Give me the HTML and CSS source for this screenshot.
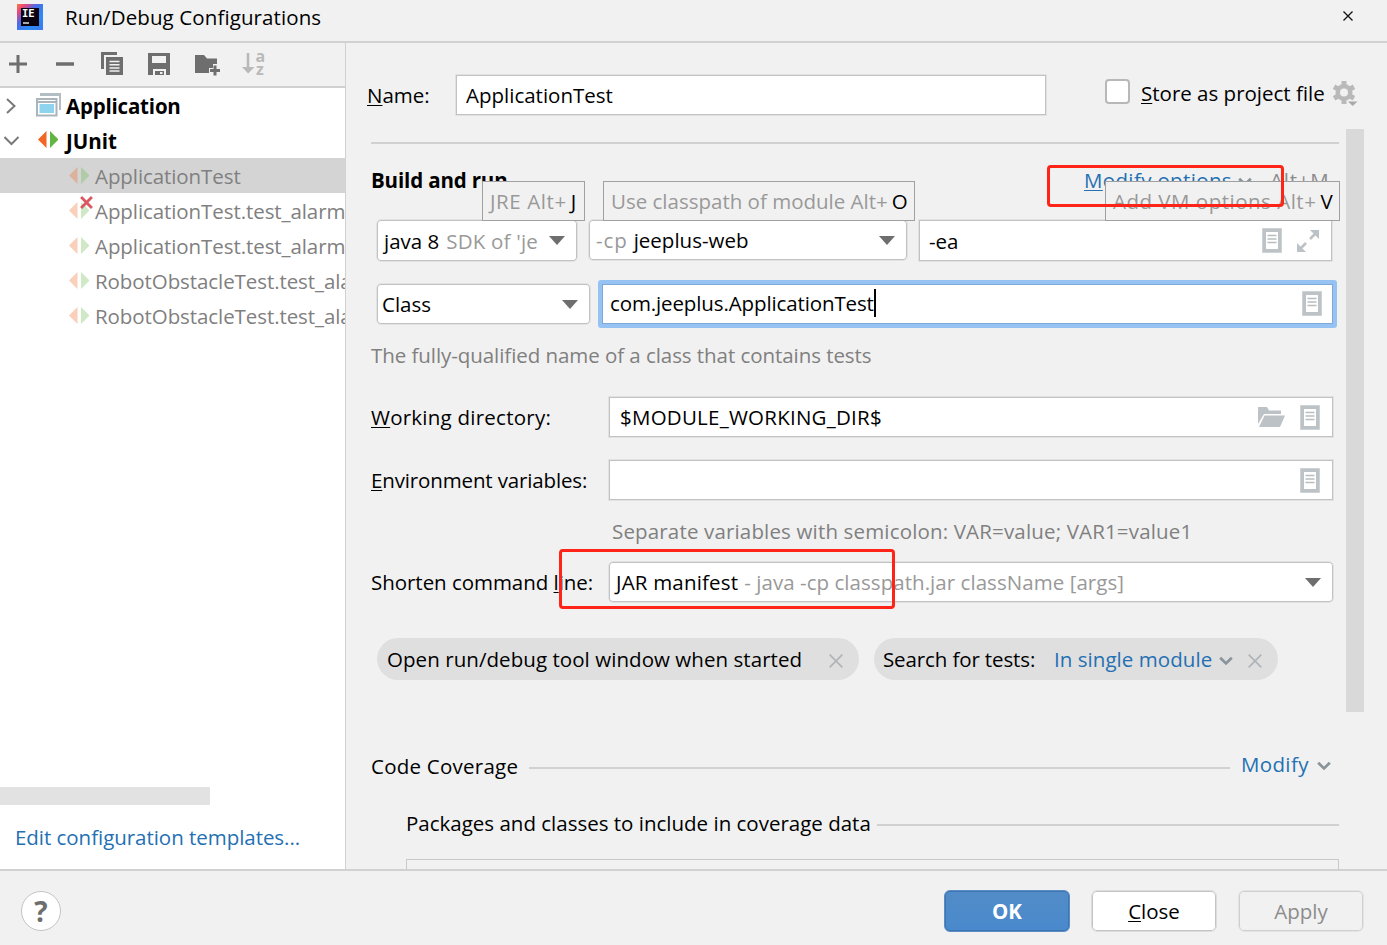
FILE: index.html
```html
<!DOCTYPE html>
<html lang="en">

<head>
    <meta charset="UTF-8">
    <meta name="viewport" content="width=device-width, initial-scale=1.0">
    <title>Run/Debug Configurations</title>
    <link rel="stylesheet" href="styles.css">
</head>

<body>
    <!-- shared icons -->
    <svg class="defs" width="0" height="0">
        <symbol id="doc" viewBox="0 0 20 25">
            <path d="M0 0h20v25H0z" fill="#dfe3e5" />
            <path d="M.5.5h19v24H.5zM4 4v17h12V4z" fill="#bcc2c6" fill-rule="evenodd" />
            <path d="M4 4h12v17H4z" fill="#fff" />
            <path d="M5.500 7.500h9M5.500 11h9M5.500 14.500h9" stroke="#b7bdc1" stroke-width="1.400" />
        </symbol>
        <symbol id="junit" viewBox="0 0 20 18">
            <path d="M8.500 0v17L0 8.500z" fill="#f26522" />
            <path d="M12 0v17l8.500-8.500z" fill="#62b543" />
        </symbol>
        <symbol id="arrow" viewBox="0 0 16 9">
            <path d="M0 0h16L8 9z" fill="#6e6e6e" />
        </symbol>
        <symbol id="chevron" viewBox="0 0 14 10">
            <path d="M1.200 1.800L7 7.400l5.800-5.600" fill="none" stroke="#8a949b" stroke-width="2.800" />
        </symbol>
        <symbol id="cross" viewBox="0 0 14 14">
            <path d="M.7.7l12.600 12.600M13.300.7L.7 13.300" stroke="#b0b5b9" stroke-width="1.700" />
        </symbol>
    </svg>

    <div class="titlebar">
        <svg class="logo" width="26" height="26" viewBox="0 0 26 26">
            <defs>
                <linearGradient id="g" x1="0" y1="0" x2="1" y2="1">
                    <stop offset="0" stop-color="#f97a3d" />
                    <stop offset=".18" stop-color="#e8467c" />
                    <stop offset=".4" stop-color="#4b6be8" />
                    <stop offset=".7" stop-color="#2b8cf5" />
                    <stop offset="1" stop-color="#3e78f0" />
                </linearGradient>
            </defs>
            <rect width="26" height="26" fill="url(#g)" />
            <rect x="4" y="4" width="18" height="18" fill="#0b0410" />
            <text class="logo-text" x="5" y="13">IE</text>
            <path d="M6 19h6" stroke="#ddd" stroke-width="1.500" />
        </svg>
        <span class="title">Run/Debug Configurations</span>
        <svg class="close" width="10" height="10" viewBox="0 0 10 10">
            <path d="M.5.500l9 9M9.500.500l-9 9" stroke="#111" stroke-width="1.300" />
        </svg>
    </div>

    <div class="main">
        <div class="sidebar">
            <div class="toolbar">
                <svg width="18" height="18" viewBox="0 0 18 18">
                    <path d="M9 0v18M0 9h18" stroke="#6e6e6e" stroke-width="3" />
                </svg>
                <svg width="18" height="18" viewBox="0 0 18 18">
                    <path d="M0 9h18" stroke="#6e6e6e" stroke-width="3.500" />
                </svg>
                <svg width="22" height="24" viewBox="0 0 22 24">
                    <path d="M0 0h16v3H3v14H0z" fill="#6e6e6e" />
                    <path d="M5 5h17v18H5z" fill="#6e6e6e" />
                    <path d="M8.500 9.500h10M8.500 12.700h10M8.500 16h10M8.500 19h10" stroke="#f1f1f1" stroke-width="1.400" />
                </svg>
                <svg width="22" height="22" viewBox="0 0 22 22">
                    <path d="M0 0h22v22h-4v-6H5v6H0zM4 3v7h14V3z" fill="#6e6e6e" fill-rule="evenodd" />
                    <path d="M7 18h9v4H7z" fill="#6e6e6e" />
                    <path d="M12 19h2.500v2H12z" fill="#f1f1f1" />
                </svg>
                <svg width="26" height="22" viewBox="0 0 26 22">
                    <path d="M0 1h9l3 3.500h10V10h-4v4h-4v5H0z" fill="#6e6e6e" />
                    <path d="M20 11.500v10M15 16.500h10" stroke="#6e6e6e" stroke-width="3" />
                </svg>
                <svg width="24" height="24" viewBox="0 0 24 24">
                    <path d="M6 1v16" stroke="#b9b9b9" stroke-width="2.600" />
                    <path d="M0 15h12.500L6.200 21.500z" fill="#b9b9b9" />
                    <text class="az" x="13.500" y="10">a</text>
                    <text class="az" x="14" y="22.500">z</text>
                </svg>
            </div>
            <div class="tree">
                <div class="row group">
                    <svg class="fold" width="16" height="16" viewBox="0 0 16 16">
                        <path d="M3 1l7.500 7L3 15" fill="none" stroke="#7a7a7a" stroke-width="2" />
                    </svg>
                    <svg class="group-icon" width="26" height="24" viewBox="0 0 26 24">
                        <path d="M4 0h21v17h-2V3H4z" fill="#b3bdc4" />
                        <path d="M0 5h21.500v18.500H0zM2 10v11.500h17.500V10z" fill="#a9b4bb" fill-rule="evenodd" />
                        <path d="M2 7.500h17.500" stroke="#fff" />
                        <path d="M3.500 11h14.500v9H3.500z" fill="#8ed4ee" />
                    </svg>
                    <span>Application</span>
                </div>
                <div class="row group">
                    <svg class="fold" width="16" height="16" viewBox="0 0 16 16">
                        <path d="M.500 4L7.500 11l7-7" fill="none" stroke="#7a7a7a" stroke-width="2" />
                    </svg>
                    <svg class="group-icon" width="26" height="18" viewBox="-2 0 26 18">
                        <use href="#junit" width="20" height="18" />
                    </svg>
                    <span class="junit-label">JUnit</span>
                </div>
                <div class="row item selected">
                    <svg class="item-icon" width="20" height="18"><use href="#junit" /></svg>
                    <span>ApplicationTest</span>
                </div>
                <div class="row item">
                    <svg class="item-icon" width="20" height="18"><use href="#junit" /></svg>
                    <svg class="error" width="13" height="13" viewBox="0 0 12 12">
                        <path d="M1 1l10 10M11 1L1 11" stroke="#db5860" stroke-width="2.600" />
                    </svg>
                    <span>ApplicationTest.test_alarmInfo</span>
                </div>
                <div class="row item">
                    <svg class="item-icon" width="20" height="18"><use href="#junit" /></svg>
                    <span>ApplicationTest.test_alarmInfo</span>
                </div>
                <div class="row item">
                    <svg class="item-icon" width="20" height="18"><use href="#junit" /></svg>
                    <span>RobotObstacleTest.test_alarm</span>
                </div>
                <div class="row item">
                    <svg class="item-icon" width="20" height="18"><use href="#junit" /></svg>
                    <span>RobotObstacleTest.test_alarm</span>
                </div>
            </div>
            <div class="hscroll"></div>
            <a class="templates">Edit configuration templates...</a>
        </div>

        <div class="editor">
            <div class="name-row">
                <label class="name-label"><u>N</u>ame:</label>
                <div class="field name-field">ApplicationTest</div>
                <div class="checkbox"></div>
                <span class="store"><u>S</u>tore as project file</span>
                <svg class="gear" width="25" height="26" viewBox="0 0 25 26">
                    <g fill="#b9b9b9">
                        <path d="M8.500 0h5v23h-5z" />
                        <path d="M8.500 0h5v23h-5z" transform="rotate(60 11 11.500)" />
                        <path d="M8.500 0h5v23h-5z" transform="rotate(120 11 11.500)" />
                        <circle cx="11" cy="11.500" r="8.500" />
                    </g>
                    <circle cx="11" cy="11.500" r="4" fill="#f1f1f1" />
                    <path d="M13.500 19.500h12l-6 7z" fill="#f1f1f1" />
                    <path d="M15 20.500h9.500L19.700 25z" fill="#a8a8a8" />
                </svg>
            </div>
            <div class="scroll">
                <div class="form">
                    <div class="line"></div>
                    <div class="build-row">
                        <b>Build and run</b>
                        <a class="modify-options"><u>M</u>odify options</a>
                        <svg class="modify-arrow" width="14" height="10"><use href="#chevron" /></svg>
                        <span class="shortcut">Alt+M</span>
                    </div>
                    <div class="combos">
                        <div class="combo jre">
                            <span>java 8</span>
                            <span class="jre-sdk">SDK of 'je</span>
                            <svg width="16" height="9"><use href="#arrow" /></svg>
                            <div class="tip tip-jre">JRE Alt+<i>J</i></div>
                        </div>
                        <div class="combo cp">
                            <span class="gray">-cp</span>
                            <span class="module">jeeplus-web</span>
                            <svg width="16" height="9"><use href="#arrow" /></svg>
                            <div class="tip tip-cp">Use classpath of module Alt+<i>O</i></div>
                        </div>
                        <div class="field vm">
                            <span>-ea</span>
                            <svg width="20" height="25"><use href="#doc" /></svg>
                            <svg class="expand" width="22" height="22" viewBox="0 0 22 22">
                                <path d="M13 0h9v9zM0 13v9h9z" fill="#bcc2c6" />
                                <path d="M13 9l5-5M9 13l-5 5" stroke="#bcc2c6" stroke-width="2.600" />
                            </svg>
                            <div class="tip tip-vm">Add VM options Alt+<i>V</i></div>
                        </div>
                    </div>
                    <div class="class-row">
                        <div class="combo kind">
                            <span>Class</span>
                            <svg width="16" height="9"><use href="#arrow" /></svg>
                        </div>
                        <div class="focus">
                            <span class="class-name">com.jeeplus.ApplicationTest</span>
                            <div class="caret"></div>
                            <svg width="20" height="25"><use href="#doc" /></svg>
                        </div>
                    </div>
                    <div class="comment class-comment">The fully-qualified name of a class that contains tests</div>

                    <div class="form-row">
                        <label class="wd-label"><u>W</u>orking directory:</label>
                        <div class="field">
                            <span class="wd">$MODULE_WORKING_DIR$</span>
                            <svg class="folder" width="27" height="20" viewBox="0 0 27 20">
                                <path d="M0 0h9l2 3.500h12V7H6L0 17z" fill="#bcc2c6" />
                                <path d="M6.500 8.500H27L22 20H1z" fill="#bcc2c6" />
                            </svg>
                            <svg width="20" height="25"><use href="#doc" /></svg>
                        </div>
                    </div>
                    <div class="form-row env">
                        <label class="env-label"><u>E</u>nvironment variables:</label>
                        <div class="field">
                            <svg width="20" height="25"><use href="#doc" /></svg>
                        </div>
                    </div>
                    <div class="comment env-comment">Separate variables with semicolon: VAR=value; VAR1=value1</div>
                    <div class="form-row shorten">
                        <label class="shorten-label">Shorten command <u>l</u>ine:</label>
                        <div class="combo">
                            <span class="jar">JAR manifest</span>
                            <span class="jar-args">- java -cp classpath.jar className [args]</span>
                            <svg width="16" height="9"><use href="#arrow" /></svg>
                        </div>
                    </div>
                    <div class="chips">
                        <div class="chip chip-open">
                            <span class="open-text">Open run/debug tool window when started</span>
                            <svg width="14" height="14"><use href="#cross" /></svg>
                        </div>
                        <div class="chip chip-search">
                            <span class="search-text">Search for tests:</span>
                            <a class="single">In single module</a>
                            <svg class="chip-arrow" width="14" height="10"><use href="#chevron" /></svg>
                            <svg width="14" height="14"><use href="#cross" /></svg>
                        </div>
                    </div>
                    <div class="coverage">
                        <span class="coverage-title">Code Coverage</span>
                        <div class="line"></div>
                        <a class="modify">Modify</a>
                        <svg width="14" height="10"><use href="#chevron" /></svg>
                    </div>
                    <div class="packages">
                        <span class="packages-title">Packages and classes to include in coverage data</span>
                        <div class="line"></div>
                    </div>
                    <div class="package-list"></div>
                </div>
                <div class="vscroll"></div>
            </div>
        </div>
    </div>

    <div class="footer">
        <div class="help">?</div>
        <div class="btn ok">OK</div>
        <div class="btn close-btn"><u>C</u>lose</div>
        <div class="btn apply">Apply</div>
    </div>

    <!-- red highlight frames -->
    <div class="mark mark-modify"></div>
    <div class="mark mark-shorten"></div>
</body>

</html>
```
FILE: styles.css
```css
* {
    margin: 0;
    padding: 0;
    box-sizing: border-box;
}

body {
    width: 1387px;
    height: 945px;
    overflow: hidden;
    position: relative;
    display: flex;
    flex-direction: column;
    background-color: #f1f1f1;
    color: #000;
    font-family: "Open Sans", "Noto Sans", sans-serif;
    font-size: 20.5px;
    line-height: 30px;
    white-space: nowrap;
}

svg {
    display: block;
    flex-shrink: 0;
}

.defs {
    position: absolute;
}

a {
    color: #2470b3;
}

u {
    text-decoration: underline;
    text-decoration-thickness: 1px;
    text-underline-offset: 2px;
}

.line {
    height: 2px;
    background-color: #d1d1d1;
}

/* 标题栏 */
.titlebar {
    height: 43px;
    border-bottom: 2px solid #d1d1d1;
    display: flex;
    align-items: center;
    padding: 0 34px 7px 17px;
}

.logo-text {
    font-family: "DejaVu Sans Mono", monospace;
    font-size: 10.5px;
    font-weight: bold;
    fill: #fff;
}

.title {
    margin-left: 22px;
    letter-spacing: .1px;
}

.close {
    margin-left: auto;
    margin-top: -2px;
}

.main {
    height: 826px;
    display: flex;
}

/* 左侧配置树 */
.sidebar {
    width: 346px;
    border-right: 1px solid #d1d1d1;
    background-color: #fff;
    display: flex;
    flex-direction: column;
    overflow: hidden;
}

.toolbar {
    height: 45px;
    background-color: #f1f1f1;
    border-bottom: 2px solid #d1d1d1;
    display: flex;
    align-items: center;
    padding: 0 0 2px 9px;
    gap: 25px;
}

.toolbar svg:nth-child(2) {
    margin-left: 4px;
}

.toolbar svg:nth-child(3) {
    margin-left: 2px;
}

.toolbar svg:nth-child(5) {
    margin-top: 3px;
}

.toolbar svg:nth-child(6) {
    margin-left: -4px;
}

.az {
    font-family: "Open Sans", sans-serif;
    font-size: 16px;
    font-weight: bold;
    fill: #b9b9b9;
}

.row {
    height: 35px;
    display: flex;
    align-items: center;
    position: relative;
}

.group {
    font-weight: bold;
    padding-left: 4px;
    letter-spacing: -.2px;
}

.group span {
    margin-left: 4px;
    margin-top: 1px;
}

.group .junit-label {
    letter-spacing: 0;
}

.fold {
    margin-right: 16px;
}

.group-icon {
    margin-top: -2px;
}

.item {
    color: #808080;
    padding-left: 69px;
    letter-spacing: -.08px;
}

.item span {
    margin-left: 6px;
    margin-top: 1px;
}

.item-icon {
    opacity: .3;
}

.selected {
    background-color: #d4d4d4;
}

.error {
    position: absolute;
    left: 80px;
    top: 3px;
}

.hscroll {
    width: 210px;
    height: 18px;
    margin-top: 454px;
    background-color: #e2e2e2;
}

.templates {
    margin: 17px 0 0 15px;
    letter-spacing: -.04px;
}

/* 右侧编辑区 */
.editor {
    flex: 1;
    display: flex;
    flex-direction: column;
    overflow: hidden;
}

.name-row {
    height: 86px;
    padding: 31px 0 13px 21px;
    display: flex;
    align-items: center;
}

.name-label {
    width: 88px;
}

/* 浅色外圈 + 深色内圈 */
.field,
.combo {
    height: 42px;
    display: flex;
    align-items: center;
    position: relative;
    background-color: #fff;
    border: 1px solid #e2e2e2;
    box-shadow: inset 0 0 0 1px #c2c2c2;
}

.field {
    padding: 0 13px 0 11px;
    gap: 15px;
}

.combo {
    border-radius: 5px;
    padding: 0 12px 0 7px;
}

.name-field {
    width: 592px;
    margin-right: 58px;
    padding-left: 10px;
}

.checkbox {
    width: 25px;
    height: 25px;
    margin-right: 11px;
    margin-top: -7px;
    background-color: #fff;
    border: 2px solid #b8b8b8;
    border-radius: 4px;
}

.store {
    margin-top: -5px;
    width: 192px;
}

.gear {
    margin-top: -2px;
}

.scroll {
    flex: 1;
    min-height: 0;
    display: flex;
    align-items: flex-start;
}

.form {
    width: 968px;
    margin-left: 25px;
    padding-top: 13px;
}

.vscroll {
    width: 18px;
    height: 583px;
    margin-left: 7px;
    background-color: #d9d9d9;
}

.build-row {
    height: 75px;
    padding-top: 21px;
    display: flex;
    align-items: flex-start;
}

.build-row b {
    width: 713px;
    letter-spacing: -.15px;
}

.modify-options {
    width: 154px;
    letter-spacing: .35px;
}

.modify-arrow {
    margin-top: 12px;
    margin-right: 18px;
}

.shortcut {
    color: #8c8c8c;
    letter-spacing: .8px;
}

.combo svg,
.field svg:first-of-type,
.focus svg {
    margin-left: auto;
}

.combos {
    display: flex;
    align-items: flex-start;
    height: 43px;
    padding-left: 5px;
}

.jre {
    width: 202px;
    height: 43px;
    margin-right: 10px;
}

.jre-sdk {
    margin-left: 7px;
    letter-spacing: .2px;
}

.jre-sdk,
.gray,
.jar-args {
    color: #999;
}

.gray {
    margin-right: 6px;
    letter-spacing: .9px;
}

.cp {
    width: 320px;
    margin-right: 10px;
}

.vm {
    width: 415px;
    height: 43px;
    padding-left: 10px;
}

/* 快捷键提示 */
.tip {
    position: absolute;
    top: -39px;
    height: 40px;
    padding: 0 7px;
    line-height: 38px;
    border: 1px solid #a0a0a0;
    background-color: #f1f1f1;
    color: #999;
}

.tip i {
    font-style: normal;
    color: #000;
    margin-left: 4px;
}

.tip-jre {
    left: 105px;
    width: 103px;
    letter-spacing: .6px;
}

.tip-cp {
    left: 14px;
    width: 312px;
}

.tip-vm {
    left: 186px;
    width: 235px;
    letter-spacing: .5px;
}

.class-row {
    display: flex;
    align-items: center;
    margin-top: 18px;
    padding-left: 5px;
}

.kind {
    width: 215px;
    margin-right: 7px;
    padding-left: 5px;
}

.focus {
    width: 739px;
    height: 48px;
    flex-shrink: 0;
    border: 4px solid #97c3f3;
    border-radius: 3px;
    box-shadow: inset 0 0 0 1px #7fa9d8;
    background-color: #fff;
    display: flex;
    align-items: center;
    padding: 0 11px 2px 8px;
}

.class-name {
    letter-spacing: -.12px;
}

.caret {
    width: 2px;
    height: 28px;
    background-color: #000;
}

.comment {
    color: #808080;
}

.class-comment {
    margin-top: 12px;
    letter-spacing: -.06px;
}

.form-row {
    display: flex;
    align-items: center;
    margin-top: 26px;
}

.form-row label {
    width: 237px;
}

.form-row .field,
.form-row .combo {
    width: 726px;
}

.wd-label,
.wd {
    letter-spacing: .24px;
}

.env {
    margin-top: 21px;
}

.env-label {
    letter-spacing: -.14px;
}

.env-comment {
    margin: 15px 0 0 241px;
    letter-spacing: .16px;
}

.shorten {
    margin-top: 15px;
}

.shorten-label {
    letter-spacing: -.04px;
}

.jar {
    letter-spacing: .18px;
}

.jar-args {
    margin-left: 6px;
    letter-spacing: .05px;
}

.chips {
    display: flex;
    gap: 15px;
    margin-top: 35px;
    padding-left: 6px;
}

.chip {
    height: 42px;
    border-radius: 21px;
    background-color: #dfdfdf;
    display: flex;
    align-items: center;
}

.chip svg {
    margin-top: 3px;
}

.chip-open {
    width: 482px;
    padding-left: 10px;
}

.open-text {
    width: 442px;
    letter-spacing: .06px;
}

.chip-search {
    width: 404px;
    padding-left: 9px;
}

.search-text {
    width: 171px;
    letter-spacing: -.12px;
}

.single {
    width: 165px;
    letter-spacing: .05px;
}

.chip .chip-arrow {
    margin-right: 15px;
}

.coverage {
    display: flex;
    align-items: center;
    margin-top: 71px;
}

.coverage-title {
    width: 158px;
    letter-spacing: .24px;
}

.coverage .line {
    width: 701px;
    margin-top: 3px;
}

.modify {
    margin: -4px 0 0 11px;
    width: 76px;
    letter-spacing: .35px;
}

.packages {
    display: flex;
    align-items: center;
    margin-top: 27px;
    padding-left: 35px;
}

.packages-title {
    width: 471px;
}

.packages .line {
    flex: 1;
    margin-top: 3px;
}

.package-list {
    height: 40px;
    margin: 21px 0 0 35px;
    border: 1px solid #c9c9c9;
}

/* 底部按钮 */
.footer {
    height: 76px;
    border-top: 2px solid #d1d1d1;
    display: flex;
    align-items: center;
    padding: 6px 23px 0 21px;
}

.help {
    width: 40px;
    height: 40px;
    line-height: 38px;
    border: 1px solid #c4c4c4;
    border-radius: 50%;
    background-color: #fff;
    color: #6e6e6e;
    font-size: 28px;
    font-weight: bold;
    text-align: center;
    margin-right: auto;
}

.btn {
    width: 126px;
    height: 42px;
    margin-left: 21px;
    line-height: 40px;
    text-align: center;
    border: 1px solid #dcdcdc;
    box-shadow: inset 0 0 0 1px #c4c4c4;
    border-radius: 6px;
    background-color: #fff;
}

.ok {
    color: #fff;
    font-weight: bold;
    border-color: #5b8dc4;
    box-shadow: inset 0 0 0 1px #3d75b5;
    background: linear-gradient(#528cc7, #4989cc);
}

.apply {
    color: #8c8c8c;
    border-color: #e4e4e4;
    box-shadow: inset 0 0 0 1px #cfcfcf;
    background-color: #f1f1f1;
}

/* 红色标注框 */
.mark {
    position: absolute;
    border: 3px solid #ff2418;
    border-radius: 4px;
}

.mark-modify {
    left: 1047px;
    top: 165px;
    width: 237px;
    height: 42px;
}

.mark-shorten {
    left: 559px;
    top: 549px;
    width: 336px;
    height: 60px;
}
```
